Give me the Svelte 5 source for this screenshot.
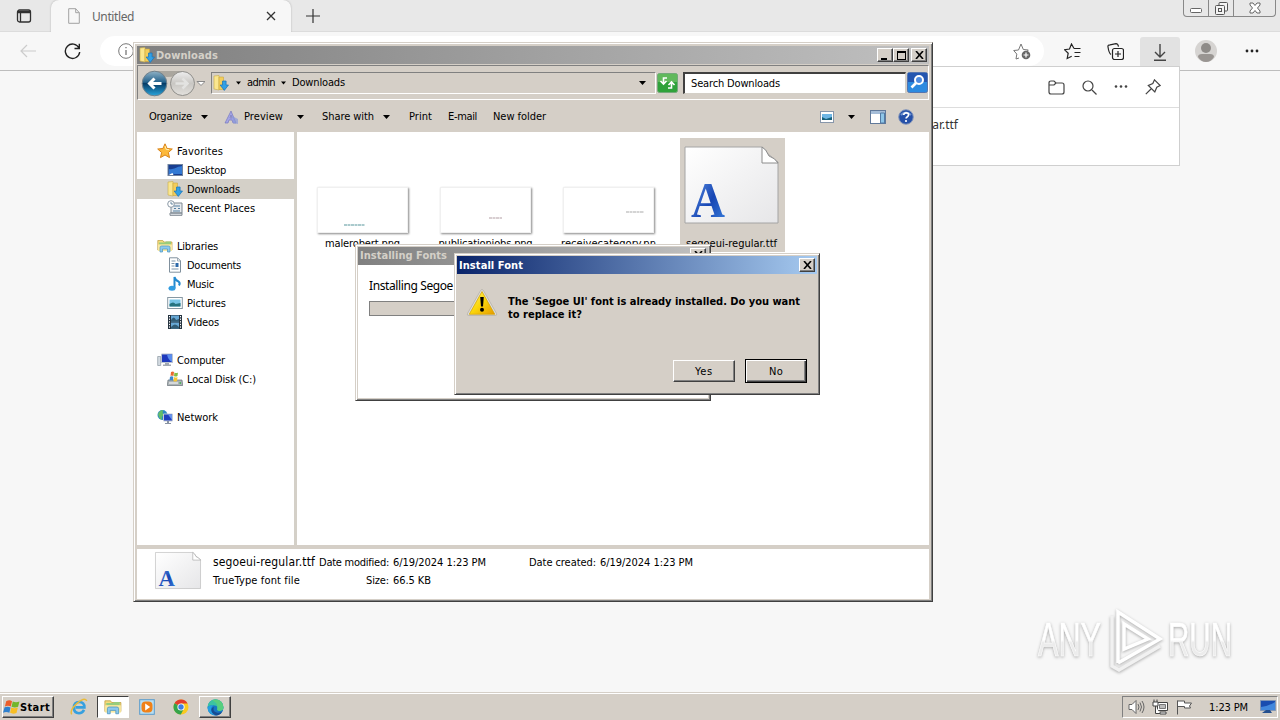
<script lang="ts">
	// Classic-theme desktop: browser behind, Explorer window with two font
	// dialogs on top, and the taskbar along the bottom edge.
	type Place = { label: string; icon: string; w: number; child?: boolean; selected?: boolean };

	const groups: Place[][] = [
		[
			{ label: 'Favorites', icon: 'star', w: 46 },
			{ label: 'Desktop', icon: 'desktop', w: 39, child: true },
			{ label: 'Downloads', icon: 'downloads', w: 53, child: true, selected: true },
			{ label: 'Recent Places', icon: 'recent', w: 68, child: true }
		],
		[
			{ label: 'Libraries', icon: 'library', w: 41 },
			{ label: 'Documents', icon: 'document', w: 54, child: true },
			{ label: 'Music', icon: 'music', w: 27, child: true },
			{ label: 'Pictures', icon: 'picture', w: 39, child: true },
			{ label: 'Videos', icon: 'video', w: 32, child: true }
		],
		[
			{ label: 'Computer', icon: 'computer', w: 48 },
			{ label: 'Local Disk (C:)', icon: 'disk', w: 69, child: true }
		],
		[{ label: 'Network', icon: 'network', w: 41 }]
	];

	const images = [
		{ name: 'malerobert.png', w: 75, x: 26, y: 37, len: 21, color: '#8fb9bd' },
		{ name: 'publicationjobs.png', w: 94, x: 48, y: 30, len: 13, color: '#cbbfc2' },
		{ name: 'receivecategory.pn', w: 95, x: 62, y: 24, len: 18, color: '#c6c6c6' }
	];

	// Tighten or loosen a label so it keeps the width of the system UI font.
	function fit(node: HTMLElement, width: number) {
		const range = document.createRange();
		range.selectNodeContents(node);
		const natural = range.getBoundingClientRect().width;
		const count = node.textContent?.length ?? 1;
		node.style.letterSpacing = `${(width - natural) / count}px`;
	}
</script>

{#snippet text(label: string, w: number)}
	<span class="text" use:fit={w}>{label}</span>
{/snippet}

{#snippet arrow()}
	<svg class="arrow" width="7" height="4" viewBox="0 0 7 4"><path d="M0 0h7L3.5 4z" /></svg>
{/snippet}

{#snippet closeGlyph()}
	<svg width="9" height="8" viewBox="0 0 9 8"><path d="M1 0l7 8M8 0L1 8" stroke="#000" stroke-width="1.6" /></svg>
{/snippet}

{#snippet fontFile(w: number, h: number)}
	<svg class="font-file" width={w} height={h} viewBox="0 0 95 78" preserveAspectRatio="none">
		<defs>
			<linearGradient id="paper" x1="0" y1="0" x2="1" y2="1">
				<stop offset="0" stop-color="#fff" />
				<stop offset="1" stop-color="#e6e6e8" />
			</linearGradient>
			<linearGradient id="blueA" x1="0" y1="0" x2="1" y2="1">
				<stop offset="0" stop-color="#6aa0ec" />
				<stop offset=".55" stop-color="#1746b4" />
				<stop offset="1" stop-color="#3d83de" />
			</linearGradient>
		</defs>
		<path d="M1 1h77q4 2 6 7l10 8v61H1z" fill="url(#paper)" stroke="#a4a4a4" />
		<path d="M78 1v16h16q-3-5-9-7-3-7-7-9z" fill="#fff" stroke="#8c8c8c" />
		<text x="7" y="71" font-size="50" textLength="34" lengthAdjust="spacingAndGlyphs" class="serif" fill="url(#blueA)">A</text>
	</svg>
{/snippet}

{#snippet icon(name: string, size = 16)}
	<svg class="icon" width={size} height={size} viewBox="0 0 16 16" fill="none">
		{#if name === 'star'}
			<path d="M8 .8l2.1 4.7 5.2.5-3.9 3.5 1.1 5.1L8 12l-4.5 2.6 1.1-5.1L.7 6l5.2-.5z" fill="#fdb93a" stroke="#d98318" />
			<path d="M8 3l1.2 3.4 3 .3" stroke="#fff0ad" />
		{:else if name === 'desktop'}
			<rect x="1" y="2.5" width="14.5" height="11" fill="#183e91" stroke="#70839e" />
			<path d="M2 12V7c5 1 6-2 13-3v8z" fill="#3379d3" />
			<path d="M1.5 13l4-2 1 2z" fill="#fff" />
		{:else if name === 'downloads'}
			<path d="M1 1l5-.5V15l-5-1z" fill="#fae68f" stroke="#c8ab48" stroke-width=".6" />
			<path d="M6 2h4.500v12.500H6z" fill="#f3cd5b" stroke="#cda83e" stroke-width=".6" />
			<path d="M9.500 6h3.600v4h2.400l-4.200 5.400L7.100 10h2.400z" fill="#32a0e5" stroke="#1873b8" stroke-width=".7" />
		{:else if name === 'recent'}
			<path d="M4 3h11v10H4zM3 13h12v2.300H3z" fill="#e6eaee" stroke="#7f8891" />
			<path d="M7 6h6M7 8.500h2m2 0h2M6 11h7" stroke="#5580a2" />
			<circle cx="4" cy="4" r="3.300" fill="#fff" stroke="#8a98a5" />
			<path d="M4 2v2h2" stroke="#48708d" stroke-width=".8" />
		{:else if name === 'library' || name === 'folder'}
			<path d="M.8 2.500h5l1 1.500H15v8H.8z" fill="#f5dd7d" stroke="#bd9b3e" stroke-width=".7" />
			<path d="M2 4.500h6l1-1h5v3H2z" fill="#98cc7c" />
			<path d="M1 6.500h14V13H1z" fill="#fae9a2" />
			<path d="M3 14V9.500q0-1.500 1.500-1.500h7q1.500 0 1.500 1.500V14h-2.500v-3h-5v3z" fill="#8cc8ee" stroke="#4b95bd" stroke-width=".7" />
		{:else if name === 'document'}
			<path d="M2.500.8h8l3 3v11.400h-11z" fill="#fff" stroke="#80909d" />
			<path d="M4.500 4h4M4.500 6.500h3M4.500 9h3M4.500 12h7" stroke="#7c94aa" />
			<path d="M8.500 6h3v4h-3z" fill="#2d69aa" />
			<path d="M10.500 1v3h3" stroke="#80909d" stroke-width=".7" />
		{:else if name === 'music'}
			<path d="M7.500 12V1q1 3.500 4 4.500 2 1.500.5 4" stroke="#2489cf" stroke-width="2" />
			<ellipse cx="5" cy="12.300" rx="3.500" ry="2.500" fill="#319ce1" />
		{:else if name === 'picture'}
			<rect x=".7" y="2.500" width="14.600" height="11" fill="#fff" stroke="#8798a3" />
			<path d="M2.500 4.500h11v7h-11z" fill="#78c4e6" />
			<path d="M2.500 9q4-3 6 0l5-1v3.500h-11z" fill="#26737f" />
		{:else if name === 'video'}
			<path d="M1 1h14v14H1z" fill="#263440" />
			<path d="M4 1.500h8v6H4zM4 8.500h8v6H4z" fill="#67a8d5" />
			<path d="M2.500 2v13M13.500 2v13" stroke="#fff" stroke-dasharray="1.300 1.300" />
			<path d="M4 6q3-5 5 0l3-1v2.500H4zM4 13q4-5 8 0v1.500H4z" fill="#315c75" />
		{:else if name === 'computer'}
			<path d="M.7 4.500h3v9h-3z" fill="#d4dbe2" stroke="#8a96a1" stroke-width=".7" />
			<path d="M4.500 2h11v8.500h-11z" fill="#1e39bd" stroke="#bac3d0" />
			<path d="M10 2.500h5V10q-4-2-5-7.500z" fill="#5a8dee" />
			<path d="M8 11h4v1.500h2V14H6v-1.500h2z" fill="#a2a9b2" />
		{:else if name === 'disk'}
			<path d="M1 9h14l.7 5.500H.3z" fill="#acb3b6" stroke="#677077" stroke-width=".7" />
			<path d="M2 12h9" stroke="#fff" /><path d="M12.500 12h1.500" stroke="#35b641" stroke-width="1.500" />
			<path d="M4 1q2-1 3 0L6.500 5q-2-1-3 0z" fill="#ea6a30" />
			<path d="M7.500 1.500q2 1 3.500 0L10.500 5q-2 1-3.500 0z" fill="#83bd42" />
			<path d="M3 5.700q2-1 3.300 0L6 9.500q-2-1-3.500 0z" fill="#3a87cf" />
			<path d="M7 6q2 1 3.500 0L10 10q-2 1-3.500 0z" fill="#f6c733" />
		{:else if name === 'network'}
			<circle cx="5.500" cy="6" r="5" fill="#2d8ac3" />
			<path d="M1 5q2-4 5-4-1 4 1 5-3 1-2 5-3-1-4-6z" fill="#64bd6a" />
			<path d="M6.500 5h9v7h-9z" fill="#203ec0" stroke="#c2cad4" /><path d="M11 5.500h4V11z" fill="#6794ed" />
			<path d="M10 12h2v2h2v1H8v-1h2z" fill="#8993a2" />
		{:else if name === 'help'}
			<circle cx="8" cy="8" r="7.300" fill="#2550a8" stroke="#8798bb" />
			<path d="M3 6q5-5 10 0" stroke="#7194d0" stroke-width="2" />
			<path d="M5.700 6q.3-2.200 2.500-2.200 2.400 0 2.400 2 0 1.300-1.500 2.100-1 .6-1 1.600" stroke="#fff" stroke-width="1.700" />
			<circle cx="8" cy="12" r="1.100" fill="#fff" />
		{:else if name === 'windows'}
			<path d="M3 2.200Q6 .4 8.500 2L7.300 7Q4.700 5.700 1.800 7z" fill="#ec5e2b" />
			<path d="M9.200 2.300q3 1.500 6.300 0l-1.300 5Q11.200 8.700 8 7.300z" fill="#72b62c" />
			<path d="M1.500 7.800q3-1.200 5.600.1L6 13q-3-1.700-6 0z" fill="#2f80ce" />
			<path d="M7.800 8.100q3 1.300 6.200 0l-1.300 5Q9.500 14.500 6.700 13z" fill="#f8be24" />
		{:else if name === 'ie'}
			<path d="M12.500 10.500Q11 13.500 8 13.500 3.500 13.500 3.500 8.500T8.200 3.500Q12.800 3.500 12.800 8.300H5" stroke="#36a0df" stroke-width="2.300" />
			<path d="M1.500 14.500Q-.5 11 6 5T15 2.500" stroke="#e9bb3a" stroke-width="1.300" />
		{:else if name === 'media'}
			<rect x=".7" y=".7" width="14.600" height="14.600" fill="#b9dff2" stroke="#5a9bcb" />
			<rect x="2.500" y="2.500" width="11" height="11" rx="4" fill="#f08118" />
			<path d="M6.200 4.500v7l5-3.500z" fill="#fff" />
		{:else if name === 'chrome'}
			<circle cx="8" cy="8" r="7.500" fill="#f9ca20" />
			<path d="M8 8L1.500 4.200A7.500 7.500 0 0 1 14.600 4.500H8z" fill="#e23c2e" />
			<path d="M8 8L1.500 4.200A7.500 7.500 0 0 0 7.800 15.500L11 9.500z" fill="#35a44b" />
			<circle cx="8" cy="8" r="3.600" fill="#fff" /><circle cx="8" cy="8" r="2.700" fill="#3d7de2" />
		{:else if name === 'edge'}
			<circle cx="8" cy="8" r="7.500" fill="#1676c4" />
			<path d="M.5 7.500A7.500 7.500 0 0 1 15.500 8q-.3 3-3.500 3.200-3 0-2.300-1.700Q10.500 6 7 6 2.500 5.500.5 7.500z" fill="#3cc4a0" />
			<path d="M8 .5A7.500 7.500 0 0 1 15.500 8q-.3 3-3.500 3.200-3 0-2.300-1.700Q11 4 5 1.200z" fill="#58cf7e" />
			<path d="M.5 8Q2 5.500 6 6q-3 2-1.800 5.500 1 2.700 4.300 4A7.500 7.500 0 0 1 .5 8z" fill="#249fe0" />
			<path d="M6.500 7.500q-1.500 4 2.500 5.200 2.500.7 5.200-.8-2 3.600-5.700 3.600Q3.500 13.500 4.200 9.500 4.700 8 6.500 7.500z" fill="#174c91" />
		{/if}
	</svg>
{/snippet}

<div class="screen">
	<div class="tabs">
		<div class="tab-menu">
			<svg width="16" height="16" viewBox="0 0 16 16" fill="none" stroke="#303030" stroke-width="1.300"><rect x="1.500" y="2" width="13" height="12" rx="2" /><path d="M2 4.500h12M2 3.500h12M4.500 5v9" /></svg>
		</div>
		<div class="tab">
			<svg width="12" height="16" viewBox="0 0 12 16" fill="none" stroke="#a2a2a2"><path d="M.7.700h7l3.600 4v10.600H.7zM7.700.700v4h3.600" /></svg>
			<span class="tab-title" use:fit={42}>Untitled</span>
			<svg width="10" height="10" viewBox="0 0 10 10" stroke="#333" stroke-width="1.300"><path d="M1 1l8 8M9 1L1 9" /></svg>
		</div>
		<svg class="plus" width="14" height="14" viewBox="0 0 14 14" stroke="#333" stroke-width="1.200"><path d="M7 0v14M0 7h14" /></svg>
		<div class="caption">
			<span><svg width="13" height="5" viewBox="0 0 13 5" fill="#fff" stroke="#666"><rect x=".5" y=".5" width="11" height="4" rx="1" /></svg></span>
			<span><svg width="13" height="13" viewBox="0 0 13 13" fill="#f3f3f3" stroke="#555"><rect x="4" y=".5" width="8.500" height="8.500" rx="1" /><rect x=".5" y="3.500" width="9" height="9" rx="1" /><rect x="3.500" y="6.500" width="3" height="3" /></svg></span>
			<span><svg width="12" height="12" viewBox="0 0 12 12" fill="#fff" stroke="#666"><path d="M1 1h3l2 2.500L8 1h3v2L8.500 6 11 9v2H8L6 8.500 4 11H1V9l2.500-3L1 3z" /></svg></span>
		</div>
	</div>
	<div class="browser-bar">
		<svg class="back-arrow" width="16" height="14" viewBox="0 0 16 14" fill="none" stroke="#ccc" stroke-width="1.200"><path d="M16 7H1m6-6L1 7l6 6" /></svg>
		<svg class="reload" width="17" height="17" viewBox="0 0 17 17" fill="none" stroke="#222" stroke-width="1.400"><path d="M15 5A7.200 7.200 0 1 0 15.700 9M15.300.8v4.700h-4.800" /></svg>
		<div class="url">
			<svg width="16" height="16" viewBox="0 0 16 16" fill="none" stroke="#777"><circle cx="8" cy="8" r="7.300" /><path d="M8 7v5M8 4v1.300" stroke-width="1.300" /></svg>
			<svg width="18" height="17" viewBox="0 0 18 17" fill="none" stroke="#777"><path d="M6 15l-3 1 .8-4.900L.7 7.500 5.500 7 8 1l2.300 5.500 5 .5-2 2" /><circle cx="13" cy="12" r="4.300" fill="#666" stroke="none" /><path d="M13 9.500v5M10.500 12h5" stroke="#fff" stroke-width="1.200" /></svg>
		</div>
		<svg class="fav" width="17" height="17" viewBox="0 0 17 17" fill="none" stroke="#222" stroke-width="1.200"><path d="M10 5.500L7.500 1 5.500 6l-5 .7 3.700 3.500-1 5.300 4.500-2.200M10 5.500h6.500M10.500 9.500h6M10.500 13.500h5" /></svg>
		<svg class="collections" width="17" height="17" viewBox="0 0 17 17" fill="none" stroke="#222" stroke-width="1.200"><path d="M4 11.500Q2 10.500 1 4 .5 2 3 1.800L9 .600q2 0 2.500 3" /><rect x="5.500" y="5.500" width="11" height="11" rx="2" /><path d="M11 8v6M8 11h6" /></svg>
		<div class="dl-button"><svg width="14" height="17" viewBox="0 0 14 17" fill="none" stroke="#444" stroke-width="1.400"><path d="M7 0v13M2 8l5 5 5-5M1 16.200h12" /></svg></div>
		<svg class="avatar" width="22" height="22" viewBox="0 0 22 22"><circle cx="11" cy="11" r="11" fill="#d6d4d2" /><circle cx="11" cy="8" r="5" fill="#8e8b88" /><path d="M3 17q0-3 4-3h8q4 0 4 3-3 5-8 5t-8-5" fill="#999592" /></svg>
		<svg class="dots" width="14" height="4" viewBox="0 0 14 4" fill="#222"><circle cx="2" cy="2" r="1.400" /><circle cx="7" cy="2" r="1.400" /><circle cx="12" cy="2" r="1.400" /></svg>
	</div>

	<div class="downloads-flyout">
		<div class="flyout-head">
			<svg width="17" height="15" viewBox="0 0 17 15" fill="none" stroke="#444" stroke-width="1.200"><path d="M1 4V3q0-2 2-2h3l2 2h6q2 0 2 2v7q0 2-2 2H3q-2 0-2-2zM1 5h5l2-2" /></svg>
			<svg width="15" height="15" viewBox="0 0 15 15" fill="none" stroke="#444" stroke-width="1.200"><circle cx="6" cy="6" r="5" /><path d="M10 10l4.500 4.500" /></svg>
			<svg width="14" height="15" viewBox="0 0 14 15" fill="#444"><circle cx="2" cy="6.500" r="1.300" /><circle cx="7" cy="6.500" r="1.300" /><circle cx="12" cy="6.500" r="1.300" /></svg>
			<svg width="16" height="16" viewBox="0 0 16 16" fill="none" stroke="#444" stroke-width="1.200"><path d="M9.500.8l5.700 5.700-3.400 1.700-2 4.800-6.500-6.500 4.500-2zM6.500 9.500L.8 15.200" /></svg>
		</div>
		<div class="flyout-item">segoeui-regular.ttf</div>
	</div>

	<svg class="watermark" width="220" height="80" viewBox="0 0 220 80">
		<defs>
			<linearGradient id="mark" gradientUnits="userSpaceOnUse" x1="0" y1="16" x2="0" y2="58">
				<stop offset=".5" stop-color="#fff" />
				<stop offset=".56" stop-color="#ececec" />
			</linearGradient>
		</defs>
		<g fill="url(#mark)" stroke="#fff" stroke-width=".7">
			<text x="9" y="53" font-size="48" textLength="63" lengthAdjust="spacingAndGlyphs">ANY</text>
			<text x="139" y="53" font-size="48" textLength="64" lengthAdjust="spacingAndGlyphs">RUN</text>
		</g>
		<g fill="none" stroke="#fff" stroke-width="3.500">
			<path d="M89 60V9l42 27-42 24" /><path d="M131 43L90 67l-7-4V13" stroke="#f1f1f1" /><path d="M95 46V21l24 15z" />
		</g>
	</svg>

	<section class="window explorer">
		<div class="title inactive">
			{@render icon('downloads')}
			{@render text('Downloads', 62)}
			<div class="sys">
				<button aria-label="Minimize"><i class="min"></i></button><button aria-label="Maximize"><i class="max"></i></button>
				<button class="x" aria-label="Close">{@render closeGlyph()}</button>
			</div>
		</div>
		<div class="nav">
			<svg width="65" height="28" viewBox="0 0 65 28">
				<defs>
					<linearGradient id="orb" x2="0" y2="1"><stop offset="0" stop-color="#8fb2c6" /><stop offset=".45" stop-color="#24628c" /><stop offset=".5" stop-color="#073c66" /><stop offset="1" stop-color="#28a5dc" /></linearGradient>
					<linearGradient id="orb2" x2="0" y2="1"><stop offset="0" stop-color="#eee" /><stop offset=".5" stop-color="#c9c7c3" /><stop offset="1" stop-color="#e3e1dd" /></linearGradient>
				</defs>
				<path d="M12 2h31v2q-15 8-31 0" fill="#aaa69e" />
				<circle cx="14.500" cy="14.500" r="12.300" fill="url(#orb)" stroke="#72818b" /><path d="M21.500 14.500h-12m5-5l-5 5 5 5" fill="none" stroke="#fff" stroke-width="3" />
				<circle cx="42.500" cy="14.500" r="12" fill="url(#orb2)" stroke="#8f8e8a" /><path d="M35.500 14.500h12m-5-5l5 5-5 5" fill="none" stroke="#e3e3e1" stroke-width="2.500" />
				<path d="M57 12.500h8l-4 4z" fill="#fff" stroke="#888" />
			</svg>
			<div class="address">
				{@render icon('downloads')}
				{@render arrow()}
				{@render text('admin', 28)}
				{@render arrow()}
				{@render text('Downloads', 53)}
				{@render arrow()}
			</div>
			<div class="go">
				<svg width="21" height="20" viewBox="0 0 21 20"><rect x=".5" y=".5" width="20" height="19" rx="2" fill="#2fa23a" stroke="#73a97a" /><path d="M1 1h19v8H1z" fill="#61b95c" /><path d="M10 5H6.500v5M3.500 8l3 3 3-3M11 15h3.500v-5M11.500 12l3-3 3 3" fill="none" stroke="#fff" stroke-width="1.600" /></svg>
			</div>
			<div class="search">{@render text('Search Downloads', 89)}</div>
			<svg width="21" height="21" viewBox="0 0 21 21"><rect x=".5" y=".5" width="20" height="20" rx="2" fill="#2c8ae0" stroke="#5475af" /><path d="M1 1h19v9H1z" fill="#2456b0" /><circle cx="12" cy="8" r="4" fill="#4d8be0" stroke="#fff" stroke-width="2" /><path d="M9 11l-4.500 4.500" stroke="#fff" stroke-width="2.600" /></svg>
		</div>
		<div class="commands">
			<div class="cmd organize">{@render text('Organize', 43)}{@render arrow()}</div>
			<div class="cmd preview">
				<svg width="16" height="16" viewBox="0 0 16 16"><path d="M1 14L7 2l5 12h-3l-1-3H5l-1 3zM6 9h2L7 6z" fill="#a6a6e6" stroke="#7778be" stroke-width=".7" /><path d="M8 7l6 3v5l-5-1z" fill="#8c9ad8" opacity=".7" /></svg>
				{@render text('Preview', 39)}{@render arrow()}
			</div>
			<div class="cmd share">{@render text('Share with', 52)}{@render arrow()}</div>
			<div class="cmd print">{@render text('Print', 23)}</div>
			<div class="cmd email">{@render text('E-mail', 29)}</div>
			<div class="cmd">{@render text('New folder', 53)}</div>
			<div class="views">
				<svg width="14" height="12" viewBox="0 0 14 12"><rect x=".5" y=".5" width="13" height="11" fill="#fff" stroke="#8796aa" /><path d="M2 3h10v6H2z" fill="#6eb6e5" /><path d="M2 9V6l4 2 6-2v3z" fill="#17617c" /></svg>
				{@render arrow()}
				<svg width="16" height="14" viewBox="0 0 16 14"><rect x=".5" y=".5" width="15" height="13" fill="#fff" stroke="#60799a" /><path d="M1 1h14v3H1z" fill="#a5bdd8" /><path d="M10.500 3h4v10h-4z" fill="#8ec6e8" stroke="#527aa4" /></svg>
				{@render icon('help')}
			</div>
		</div>
		<div class="body">
			<nav class="places">
				{#each groups as group}
					<div class="group">
						{#each group as place (place.label)}
							<div class="place" class:child={place.child} class:selected={place.selected}>
								{@render icon(place.icon)}
								{@render text(place.label, place.w)}
							</div>
						{/each}
					</div>
				{/each}
			</nav>
			<div class="files">
				{#each images as img (img.name)}
					<div class="file">
						<div class="thumb">
							<svg width="89" height="44" viewBox="0 0 89 44"><path d="M{img.x} {img.y}h{img.len}" stroke={img.color} stroke-width="1.500" stroke-dasharray="3 .5" /></svg>
						</div>
						{@render text(img.name, img.w)}
					</div>
				{/each}
				<div class="file picked">
					{@render fontFile(95, 78)}
					{@render text('segoeui-regular.ttf', 91)}
				</div>
			</div>
		</div>
		<div class="details">
			{@render fontFile(46, 37)}
			<div class="facts">
				<span class="name" use:fit={102}>segoeui-regular.ttf</span>
				<span class="key">{@render text('Date modified:', 70)}</span>
				{@render text('6/19/2024 1:23 PM', 93)}
				<span class="key">{@render text('Date created:', 67)}</span>
				{@render text('6/19/2024 1:23 PM', 93)}
				{@render text('TrueType font file', 87)}
				<span class="key">{@render text('Size:', 23)}</span>
				{@render text('66.5 KB', 38)}
			</div>
		</div>
	</section>

	<section class="window installing">
		<div class="title inactive">
			{@render text('Installing Fonts', 87)}
			<div class="sys"><button class="x" aria-label="Close">{@render closeGlyph()}</button></div>
		</div>
		<div class="progress-body">
			<span class="segoe" use:fit={84}>Installing Segoe</span>
			<div class="progress"></div>
		</div>
	</section>

	<section class="window dialog">
		<div class="title">
			{@render text('Install Font', 64)}
			<div class="sys"><button class="x" aria-label="Close">{@render closeGlyph()}</button></div>
		</div>
		<div class="message">
			<svg width="32" height="30" viewBox="0 0 32 30">
				<defs><linearGradient id="warn" x2="1" y2="1"><stop offset="0" stop-color="#fff16e" /><stop offset=".5" stop-color="#fbd70b" /><stop offset="1" stop-color="#e59a00" /></linearGradient></defs>
				<path d="M16 1.500q1 0 2 2l12.500 22q.8 2-1 2H2.500q-1.800 0-1-2L14 3.500q1-2 2-2z" fill="#ddd" stroke="#b0aca2" stroke-width=".7" />
				<path d="M16 3.500l12.800 22.800H3.200z" fill="url(#warn)" stroke="#d3a000" stroke-width=".7" />
				<path d="M14.200 9h3.600l-.8 9.500h-2z" /><circle cx="16" cy="21.800" r="2" />
			</svg>
			<p>
				{@render text("The 'Segoe UI' font is already installed. Do you want", 292)}<br />
				{@render text('to replace it?', 74)}
			</p>
		</div>
		<div class="actions">
			<button>{@render text('Yes', 18)}</button>
			<button class="default">{@render text('No', 14)}</button>
		</div>
	</section>

	<footer class="taskbar">
		<div class="start">{@render icon('windows', 17)}{@render text('Start', 30)}</div>
		<div class="task">{@render icon('ie', 18)}</div>
		<div class="task pressed">{@render icon('folder', 18)}</div>
		<div class="task">{@render icon('media')}</div>
		<div class="task">{@render icon('chrome')}</div>
		<div class="task raised">{@render icon('edge', 17)}</div>
		<div class="tray">
			<svg width="17" height="16" viewBox="0 0 17 16" fill="none" stroke="#666"><path d="M1 5.500h3l4-4v13l-4-4H1z" fill="#fff" /><path d="M10 5q2 3 0 6M12 3.500q3 4.500 0 9M14 2q4 6 0 12" /></svg>
			<svg width="17" height="16" viewBox="0 0 17 16" fill="none" stroke="#444"><path d="M5.500 3.500h10v8h-10z" fill="#fff" /><path d="M7.500 5.500h6v4h-6z" fill="#bbb" stroke="#777" /><path d="M8 13h6v2H8z" fill="#fff" /><path d="M1 3h5v4H1zM2 .5V3M5 .5V3M3.500 7v7.500H8" fill="#fff" /></svg>
			<svg width="17" height="16" viewBox="0 0 17 16" fill="#fff" stroke="#555"><path d="M1.500 1.500v14M1.500 2h7v2h7l-2 3 1 2h-6V7.500h-7z" /></svg>
			{@render text('1:23 PM', 39)}
			<svg width="16" height="14" viewBox="0 0 16 14"><path d="M.5.500h15v10H.5z" fill="#194db0" stroke="#8296b5" /><path d="M1 7q8-1 14-5v8H1z" fill="#4288dd" /><path d="M2 13l4-3h4l2 3z" fill="#244f8e" /></svg>
		</div>
	</footer>
</div>

<style>
	:global(body) {
		margin: 0;
		overflow: hidden;
	}
	.screen {
		--face: #d5cfc7;
		position: relative;
		display: flex;
		flex-direction: column;
		width: 1280px;
		height: 720px;
		overflow: hidden;
		background: #f7f7f7;
		color: #000;
		font: 11px/13px Tahoma, 'DejaVu Sans Condensed', 'DejaVu Sans', sans-serif;
	}
	svg {
		display: block;
		flex: none;
	}
	.font-file,
	.watermark {
		overflow: visible;
	}
	.text {
		white-space: nowrap;
	}
	.serif {
		font-family: 'Liberation Serif', serif;
		font-weight: bold;
	}
	button {
		box-sizing: border-box;
		padding: 0;
		font: inherit;
		color: inherit;
		background: var(--face);
		border: 1px solid;
		border-color: #fff #404040 #404040 #fff;
		box-shadow: inset -1px -1px #808080;
	}

	/* browser */
	.tabs {
		display: flex;
		height: 31px;
		background: #e8e8e8;
		border-bottom: 1px solid #dcdcdc;
	}
	.tab-menu {
		box-sizing: border-box;
		width: 51px;
		padding: 8px 0 0 16px;
	}
	.tab {
		display: flex;
		align-items: center;
		box-sizing: border-box;
		width: 240px;
		height: 32px;
		padding: 0 15px 0 17px;
		background: #f7f7f7;
		border-radius: 8px 8px 0 0;
		box-shadow: 0 0 2px #aaa;
		clip-path: inset(0 -3px 0 -3px);
	}
	.tab-title {
		flex: 1;
		margin-left: 12px;
		color: #666;
		font: 12px 'Noto Sans', sans-serif;
	}
	.plus {
		margin: 9px 0 0 15px;
	}
	.caption {
		display: flex;
		box-sizing: border-box;
		width: 93px;
		height: 17px;
		margin: 0 4px 0 auto;
		border: 1px solid #888;
		border-top: 0;
		border-radius: 0 0 4px 4px;
	}
	.caption span {
		display: flex;
		justify-content: center;
		align-items: center;
		width: 24px;
		border-right: 1px solid #888;
	}
	.caption span:first-child svg {
		margin-top: 5px;
	}
	.caption span:last-child {
		flex: 1;
		border: 0;
	}
	.browser-bar {
		display: flex;
		align-items: center;
		box-sizing: border-box;
		height: 39px;
		border-bottom: 1px solid #bdbdbd;
	}
	.back-arrow {
		margin-left: 20px;
	}
	.reload {
		margin-left: 28px;
	}
	.url {
		display: flex;
		justify-content: space-between;
		align-items: center;
		box-sizing: border-box;
		width: 944px;
		height: 30px;
		margin-left: 19px;
		padding: 0 13px 0 18px;
		background: #fff;
		border-radius: 15px;
	}
	.fav {
		margin-left: 20px;
	}
	.collections {
		margin-left: 26px;
	}
	.dl-button {
		display: flex;
		justify-content: center;
		align-items: center;
		width: 40px;
		height: 31px;
		margin: 3px 0 0 16px;
		background: #e2e2e2;
		border-radius: 3px;
	}
	.avatar {
		margin-left: 15px;
	}
	.dots {
		margin-left: 28px;
	}
	.downloads-flyout {
		position: absolute;
		top: 66px;
		left: 850px;
		box-sizing: border-box;
		width: 330px;
		height: 100px;
		background: #fff;
		border: 1px solid #cfcfcf;
	}
	.flyout-head {
		display: flex;
		align-items: center;
		justify-content: flex-end;
		gap: 17px;
		height: 40px;
		padding-right: 18px;
		border-bottom: 1px solid #ddd;
	}
	.flyout-item {
		padding: 8px 221px 0 0;
		text-align: right;
		color: #333;
		font: 12px 'Noto Sans', sans-serif;
	}
	.watermark {
		position: absolute;
		top: 603px;
		left: 1029px;
		font-family: 'Liberation Sans', sans-serif;
		filter: drop-shadow(0 1px 1.500px #aaa);
	}

	/* windows */
	.window {
		position: absolute;
		display: flex;
		flex-direction: column;
		box-sizing: border-box;
		padding: 2px;
		background: var(--face);
		border: 1px solid;
		border-color: var(--face) #404040 #404040 var(--face);
		box-shadow: inset 1px 1px #fff, inset -1px -1px #808080;
	}
	.title {
		display: flex;
		align-items: center;
		flex: none;
		box-sizing: border-box;
		height: 18px;
		padding: 0 2px;
		color: #fff;
		font-weight: bold;
		background: linear-gradient(90deg, #0a246a, #a6caf0);
	}
	.title.inactive {
		color: #d4d0c8;
		background: linear-gradient(90deg, #808080, #c0c0c0);
	}
	.sys {
		display: flex;
		margin-left: auto;
	}
	.sys button {
		display: flex;
		justify-content: center;
		align-items: center;
		width: 16px;
		height: 14px;
	}
	.sys .x {
		margin-left: 2px;
	}
	.min {
		width: 6px;
		height: 2px;
		margin: 7px 3px 0 0;
		background: #000;
	}
	.max {
		box-sizing: border-box;
		width: 9px;
		height: 9px;
		border: 1px solid #000;
		border-top-width: 2px;
	}
	.explorer {
		top: 42px;
		left: 133px;
		width: 800px;
		height: 560px;
		padding: 3px 3px 2px;
	}
	.explorer .title .text {
		margin-left: 1px;
	}
	.nav {
		display: flex;
		align-items: center;
		flex: none;
		box-sizing: border-box;
		height: 35px;
		margin-top: 1px;
		padding: 0 0 0 2px;
		border: 1px solid;
		border-color: #808080 #fff #fff #808080;
	}
	.address {
		display: flex;
		align-items: center;
		box-sizing: border-box;
		width: 445px;
		height: 22px;
		margin-left: 6px;
		padding: 0 9px 0 1px;
		border: 1px solid;
		border-color: #808080 #fff #fff #808080;
	}
	.address .icon {
		margin-right: 7px;
	}
	.address .arrow {
		width: 5px;
		margin-right: 6px;
	}
	.address .text + .arrow {
		margin-left: 6px;
	}
	.address .text + .arrow:last-child {
		width: 7px;
		margin: 0 0 0 auto;
	}
	.go {
		margin: 0 5px 0 1px;
	}
	.search {
		flex: 1;
		box-sizing: border-box;
		height: 22px;
		margin-right: 1px;
		padding: 3px 6px;
		background: #fff;
		border: 1px solid #808080;
		border-width: 2px 1px 1px 2px;
		border-color: #404040 #d4d0c8 #d4d0c8 #404040;
	}
	.commands {
		display: flex;
		align-items: center;
		flex: none;
		box-sizing: border-box;
		height: 32px;
		padding: 1px 15px 0 12px;
	}
	.cmd {
		display: flex;
		align-items: center;
	}
	.cmd .arrow {
		margin-left: 9px;
	}
	.preview .text {
		margin-left: 4px;
	}
	.preview .arrow {
		margin-left: 14px;
	}
	.organize {
		width: 75px;
	}
	.preview {
		width: 98px;
	}
	.share {
		width: 87px;
	}
	.print {
		width: 39px;
	}
	.email {
		width: 45px;
	}
	.views {
		display: flex;
		align-items: center;
		margin-left: auto;
	}
	.views .arrow {
		margin: 0 15px 0 14px;
	}
	.views .icon {
		margin-left: 12px;
	}
	.body {
		display: flex;
		flex: none;
		height: 413px;
		background: #fff;
	}
	.places {
		box-sizing: border-box;
		width: 160px;
		padding-top: 10px;
		border-right: 3px solid #d4d0c8;
	}
	.group {
		margin-bottom: 19px;
	}
	.place {
		display: flex;
		align-items: center;
		gap: 4px;
		height: 19px;
		padding-left: 20px;
	}
	.place .icon {
		margin-top: -1px;
	}
	.child {
		padding-left: 30px;
	}
	.place.selected {
		margin-top: -1px;
		padding-top: 1px;
		background: #d4d0c8;
	}
	.files {
		display: flex;
		gap: 18px;
		padding: 6px 0 0 14px;
	}
	.file {
		display: flex;
		flex-direction: column;
		align-items: center;
		justify-content: flex-end;
		box-sizing: border-box;
		width: 105px;
		height: 114px;
		padding: 0 2px 2px 0;
	}
	.file .text {
		margin-top: 4px;
	}
	.thumb {
		border: 1px solid #f0f0f0;
		box-shadow: 1px 1px 2px #888;
	}
	.picked {
		background: var(--face);
	}
	.picked .text {
		margin-top: 13px;
	}
	.details {
		display: flex;
		flex: 1;
		margin-top: 4px;
		padding: 3px 0 0 18px;
		background: #fff;
	}
	.facts {
		display: grid;
		grid-template-columns: 102px 78px 135px 72px 100px;
		grid-auto-rows: 18px;
		align-items: center;
		height: 36px;
		margin: 1px 0 0 12px;
	}
	.name {
		font-size: 12px;
		white-space: nowrap;
	}
	.key {
		padding-right: 4px;
		text-align: right;
	}

	/* dialogs */
	.installing {
		top: 244px;
		left: 355px;
		width: 356px;
		height: 157px;
	}
	.installing .title {
		padding: 0 2px 2px;
	}
	.progress-body {
		flex: 1;
		padding: 13px 11px;
		background: #fff;
	}
	.segoe {
		font: 12px/16px 'Noto Sans', sans-serif;
		white-space: nowrap;
	}
	.progress {
		height: 13px;
		margin-top: 7px;
		background: var(--face);
		border: 1px solid #808080;
	}
	.dialog {
		top: 253px;
		left: 454px;
		width: 366px;
		height: 142px;
	}
	.message {
		display: flex;
		gap: 10px;
		padding: 14px 0 0 9px;
		font-weight: bold;
	}
	.message p {
		margin: 7px 0 0;
	}
	.actions {
		display: flex;
		justify-content: flex-end;
		align-items: center;
		gap: 10px;
		margin: auto 10px 9px 0;
	}
	.actions button {
		width: 62px;
		height: 22px;
	}
	.actions .default {
		height: 24px;
		border-color: #000;
		box-shadow: inset 1px 1px #fff, inset -1px -1px #404040, inset -2px -2px #808080;
	}

	/* taskbar */
	.taskbar {
		display: flex;
		align-items: center;
		box-sizing: border-box;
		height: 28px;
		margin-top: auto;
		padding: 1px 2px 0;
		background: var(--face);
		border-top: 1px solid var(--face);
		box-shadow: inset 0 1px #fff;
	}
	.start,
	.raised {
		background: var(--face);
		border: 1px solid;
		border-color: #fff #404040 #404040 #fff;
		box-shadow: inset -1px -1px #808080;
	}
	.start {
		display: flex;
		align-items: center;
		box-sizing: border-box;
		width: 52px;
		height: 22px;
		margin-right: 9px;
		font-weight: bold;
	}
	.task {
		display: flex;
		justify-content: center;
		align-items: center;
		box-sizing: border-box;
		width: 32px;
		height: 22px;
		margin-right: 2px;
	}
	.pressed {
		background: #fff;
		border: 1px solid;
		border-color: #404040 #fff #fff #404040;
	}
	.tray {
		display: flex;
		align-items: center;
		box-sizing: border-box;
		width: 156px;
		height: 22px;
		margin-left: auto;
		padding: 0 1px 0 5px;
		border: 1px solid;
		border-color: #808080 #fff #fff #808080;
	}
	.tray svg {
		margin-right: 7px;
	}
	.tray .text {
		margin: 0 12px 0 auto;
	}
	.tray svg:last-child {
		margin: 0;
	}
</style>
